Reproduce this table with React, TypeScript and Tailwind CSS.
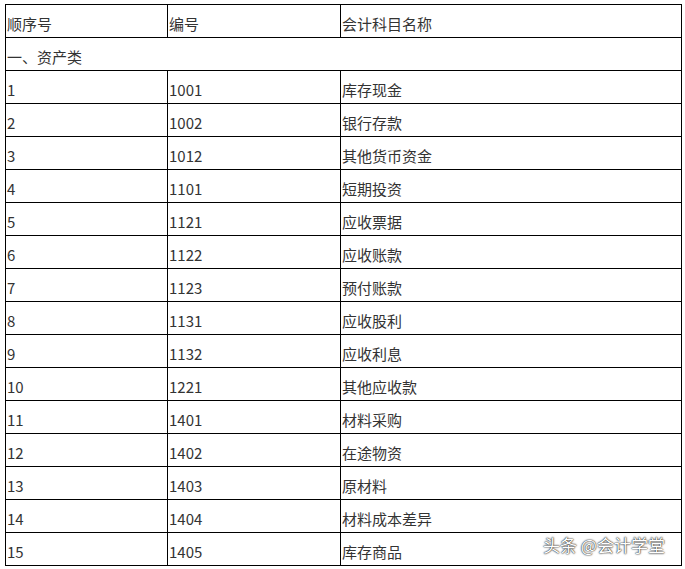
const rows: [string, string, string][] = [
  ["1", "1001", "库存现金"],
  ["2", "1002", "银行存款"],
  ["3", "1012", "其他货币资金"],
  ["4", "1101", "短期投资"],
  ["5", "1121", "应收票据"],
  ["6", "1122", "应收账款"],
  ["7", "1123", "预付账款"],
  ["8", "1131", "应收股利"],
  ["9", "1132", "应收利息"],
  ["10", "1221", "其他应收款"],
  ["11", "1401", "材料采购"],
  ["12", "1402", "在途物资"],
  ["13", "1403", "原材料"],
  ["14", "1404", "材料成本差异"],
  ["15", "1405", "库存商品"],
];

const cell =
  "h-[33px] border-r border-b border-black pl-px pt-[9px] text-[15px] leading-[20px] text-[#333] whitespace-nowrap overflow-hidden";

export default function App() {
  return (
    <div
      className="relative h-[569px] w-[685px] bg-white pt-[4px] pl-[5px]"
      style={{ fontFamily: '"Noto Sans CJK SC", "Noto Sans", sans-serif' }}
    >
      <div className="grid w-[677px] grid-cols-[162px_173px_341px] border-l border-t border-black">
        <div className={cell}>顺序号</div>
        <div className={cell}>编号</div>
        <div className={cell}>会计科目名称</div>
        <div className={`${cell} col-span-3`}>一、资产类</div>
        {rows.map(([no, code, name]) => (
          <div key={code} className="contents">
            <div className={cell}>{no}</div>
            <div className={cell}>{code}</div>
            <div className={cell}>{name}</div>
          </div>
        ))}
      </div>
      <div className="absolute left-[543px] top-[533px] text-[17px] leading-[24px] text-white [text-shadow:0_0_2px_rgba(0,0,0,0.9),0_0_1px_rgba(0,0,0,0.9)]">
        头条 @会计学堂
      </div>
    </div>
  );
}
